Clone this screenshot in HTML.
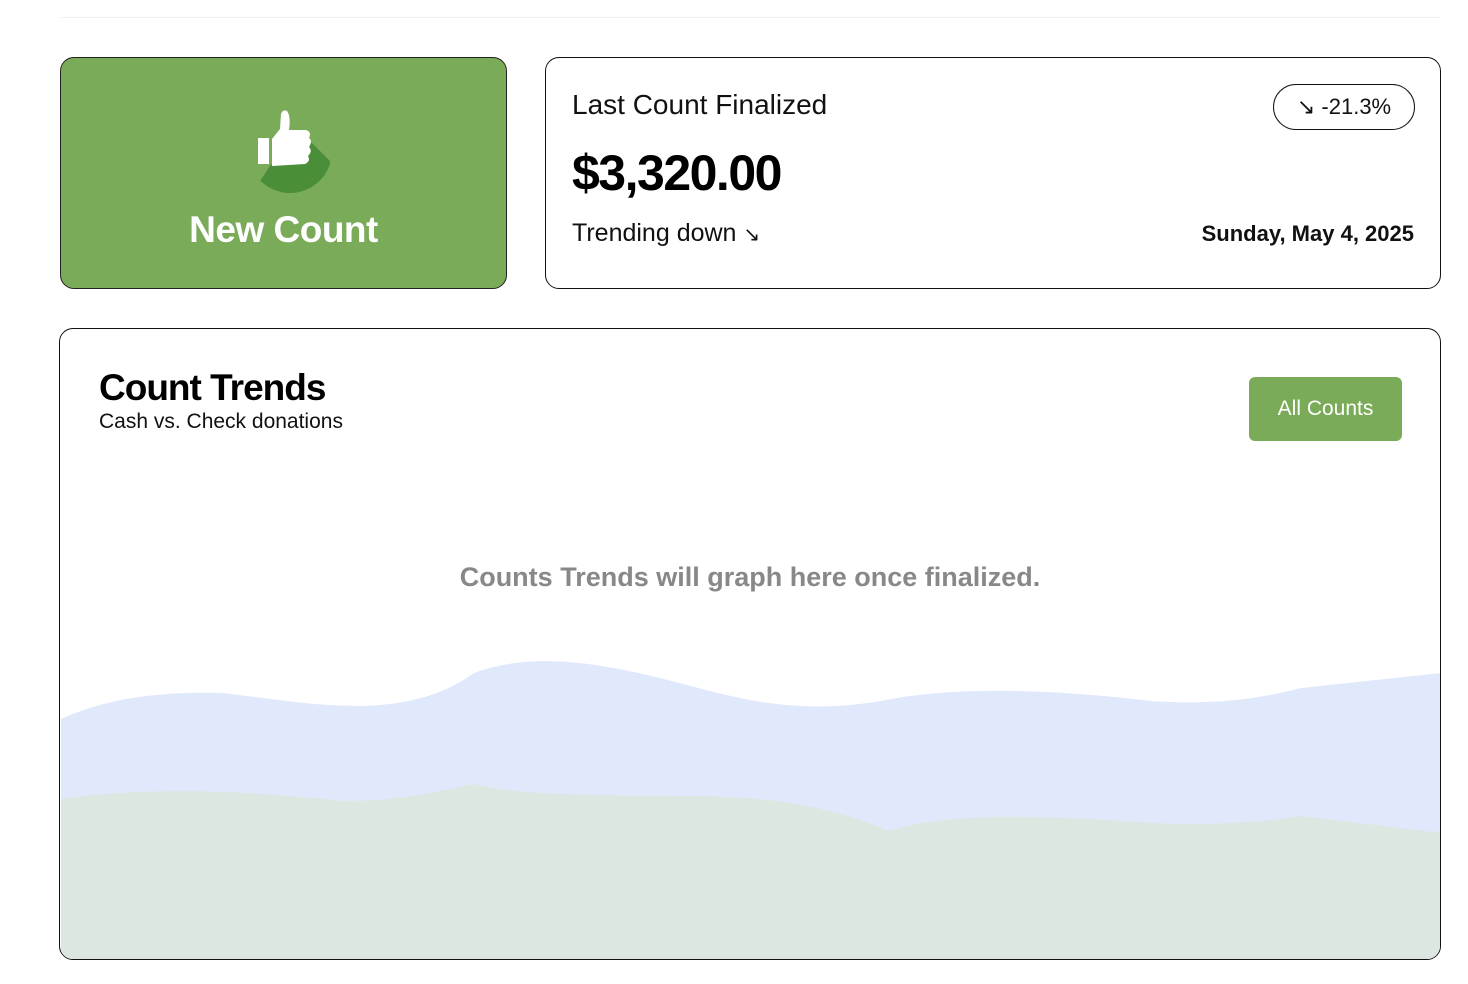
<!DOCTYPE html>
<html><head><meta charset="utf-8"><style>
body{margin:0;width:1468px;height:984px;background:#fff;font-family:"Liberation Sans",sans-serif;position:relative;overflow:hidden}
.topline{position:absolute;left:60px;top:17px;width:1380px;height:1px;background:#f0f0f0}
.new{position:absolute;left:60px;top:57px;width:447px;height:232px;background:#7aab59;border:1px solid #222;border-radius:14px;box-sizing:border-box}
.new .t{position:absolute;left:0;right:0;top:151px;text-align:center;color:#fff;font-weight:bold;font-size:37px;letter-spacing:-0.5px}
.last{position:absolute;left:545px;top:57px;width:896px;height:232px;border:1px solid #111;border-radius:14px;box-sizing:border-box}
.card{position:absolute;left:59px;top:328px;width:1382px;height:632px;border:1px solid #111;border-radius:14px;box-sizing:border-box;overflow:hidden}
</style></head><body>
<div class="topline"></div>
<div class="new">
<svg style="position:absolute;left:169px;top:43px" width="100" height="100" viewBox="230 100 100 100">
<clipPath id="c"><circle cx="290" cy="150" r="42"/></clipPath>
<path clip-path="url(#c)" d="M270 165 L300 130 L340 170 L300 210 L260 180Z" fill="#4a8e3a"/>
<rect x="258" y="137" width="11" height="26" fill="#fff"/>
<path d="M272 138 L280 128 L281 113 Q283 108 287 110 Q291 115 289 129 L306 129 Q312 131 309 137 Q313 140 309 146 Q313 150 308 155 Q311 160 305 163 L272 165Z" fill="#fff"/>
</svg>
<div class="t">New Count</div>
</div>
<div class="last">
<div style="position:absolute;left:26px;top:31px;font-size:28px;color:#111">Last Count Finalized</div>
<div style="position:absolute;left:26px;top:86px;font-size:50px;font-weight:bold;color:#000;letter-spacing:-1.5px">$3,320.00</div>
<div style="position:absolute;left:26px;top:161px;font-size:25px;color:#111">Trending down <span style="font-size:20px">↘</span></div>
<div style="position:absolute;right:26px;top:163px;font-size:22px;font-weight:bold;color:#111">Sunday, May 4, 2025</div>
<div style="position:absolute;left:727px;top:26px;width:142px;height:46px;border:1px solid #111;border-radius:23px;box-sizing:border-box;font-size:22px;text-align:center;line-height:44px;color:#111">↘ -21.3%</div>
</div>
<div class="card">
<svg style="position:absolute;left:-59px;top:-328px" width="1468" height="984">
<path d="M60 718 C100 700 150 690 220 692 C300 700 400 725 473 672 C500 662 540 655 600 665 C700 680 760 720 880 700 C950 685 1050 688 1150 700 C1220 705 1270 695 1300 687 L1440 672 L1440 960 L60 960Z" fill="#e0e8fb"/>
<path d="M60 798 C150 785 250 790 340 800 C400 800 440 790 473 783 C500 790 540 795 700 795 C790 797 840 810 888 830 C950 810 1050 815 1150 822 C1220 825 1270 820 1300 815 L1440 832 L1440 960 L60 960Z" fill="#dbe7e0"/>
</svg>
<div style="position:absolute;left:39px;top:38px;font-size:37px;font-weight:bold;color:#000;letter-spacing:-1px">Count Trends</div>
<div style="position:absolute;left:39px;top:81px;font-size:21px;color:#111">Cash vs. Check donations</div>
<div style="position:absolute;left:1189px;top:48px;width:153px;height:64px;background:#7aab59;border-radius:6px;color:#fff;font-size:21px;text-align:center;line-height:64px">All Counts</div>
<div style="position:absolute;left:0;right:0;top:233px;text-align:center;font-size:27px;font-weight:bold;color:#888">Counts Trends will graph here once finalized.</div>
</div>
</body></html>
